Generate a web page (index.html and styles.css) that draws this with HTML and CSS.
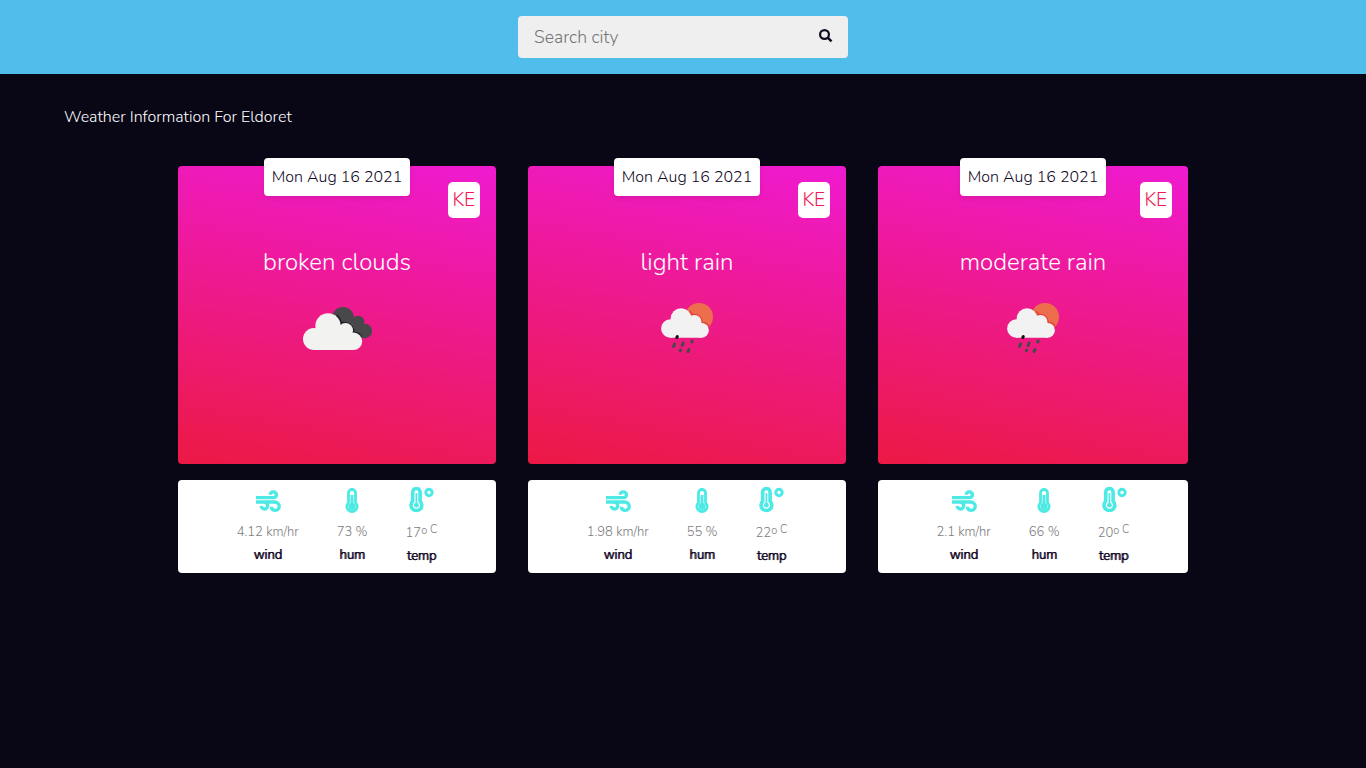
FILE: index.html
```html
<!DOCTYPE html>
<html lang="en">
<head>
<meta charset="utf-8">
<title>Weather</title>
<link rel="stylesheet" href="styles.css">
</head>
<body>
<svg class="defs" width="0" height="0" aria-hidden="true">
  <symbol id="wind" viewBox="0 0 26 24">
    <g fill="none" stroke="currentColor" stroke-width="3.300">
      <path d="M1 8.700H17.800C22.800 8.700 22.400 2.900 18.400 2.900C16.300 2.900 15.300 4.200 15.300 5.800"/>
      <path d="M1 13H8.800C14 13 13.600 20 9.600 20C7.600 20 6.200 18.600 6.200 17"/>
      <path d="M10 13H19.500C25.800 13 25.600 21.300 20.300 21.300C17.800 21.300 16.500 19.800 16.500 17.800"/>
    </g>
  </symbol>
  <symbol id="hum" viewBox="0 0 14 26">
    <path d="M3.500 14.700V5a3.500 3.500 0 0 1 7 0v9.700a5.100 5.100 0 1 1-7 0z" fill="none" stroke="currentColor" stroke-width="2.800"/>
    <circle cx="7" cy="18.600" r="3.500" fill="currentColor"/><path d="M7 7v11" stroke="currentColor" stroke-width="3"/>
  </symbol>
  <symbol id="temp" viewBox="0 0 26 26">
    <path d="M4.700 14.200V5.200a3.700 3.700 0 0 1 7.400 0v9a5.400 5.400 0 1 1-7.400 0z" fill="none" stroke="currentColor" stroke-width="3.600"/>
    <circle cx="8.400" cy="18.200" r="2.400" fill="currentColor"/><path d="M8.400 6v12" stroke="currentColor" stroke-width="1.700"/>
    <circle cx="21" cy="5.500" r="3.200" fill="none" stroke="currentColor" stroke-width="3"/>
  </symbol>
  <symbol id="clouds" viewBox="0 0 100 65">
    <g fill="#48484a"><circle cx="53" cy="23" r="11"/><circle cx="68" cy="27" r="6.300"/><circle cx="75" cy="36" r="7.200"/><path d="M53 25h15l7 18H60z"/></g>
    <path fill="none" stroke="#222226" stroke-width="2" d="M46.500 20q4 4 4.700 8q8-1.500 12.300 6.500v3q5 0 8 4"/>
    <g fill="#f2f2f0"><circle cx="24" cy="44" r="11"/><circle cx="38" cy="31" r="12.700"/><circle cx="55.500" cy="35.500" r="7.500"/><circle cx="63.500" cy="46.300" r="8.700"/><path d="M24 34h30l10 12v9H24z"/></g>
  </symbol>
  <symbol id="rain" viewBox="0 0 100 65">
    <circle cx="59" cy="22" r="14" fill="#ec6e4c"/>
    <path fill="none" stroke="#e33f3d" stroke-width="1.500" d="M49.500 16q2.500 2 2.500 3.500q9-1 10 8q5 0 7 4"/>
    <g fill="#f2f2f2"><circle cx="30.300" cy="33.500" r="9.200"/><circle cx="41" cy="23.500" r="10.300"/><circle cx="54.500" cy="27" r="7"/><circle cx="61.500" cy="35.300" r="7.400"/><path d="M30 25h25l7 10v7.700H30z"/></g>
    <g stroke="#48484a" stroke-width="3" stroke-linecap="round"><path stroke="#111" d="M37.300 41.500l-.5.900"/><path d="M34.500 49l-1 2.500M43.200 48l-1 2.500M52.200 46l-.5.900M40.600 55.200l-.3.500M49 54.500l-1 2"/></g>
  </symbol>
</svg>
<header class="topbar">
  <form class="search">
    <input class="search-input" type="text" placeholder="Search city" aria-label="Search city">
    <svg class="search-icon" viewBox="0 0 14 14"><circle cx="5.500" cy="5.500" r="4.400" fill="none" stroke="currentColor" stroke-width="2.200"/><path d="M8.700 8.700l3.800 3.700" stroke="currentColor" stroke-width="2.500"/></svg>
  </form>
</header>
<main class="content">
  <h1 class="title">Weather Information For Eldoret</h1>
  <div class="cards">
    <article class="card">
      <section class="sky"><time class="date">Mon Aug 16 2021</time><span class="country">KE</span><p class="summary">broken clouds</p><svg class="picture"><use href="#clouds"/></svg></section>
      <section class="stats">
        <div class="stat"><svg class="icon-wind"><use href="#wind"/></svg><span class="value">4.12 km/hr</span><b class="label">wind</b></div>
        <div class="stat"><svg class="icon-hum"><use href="#hum"/></svg><span class="value">73 %</span><b class="label">hum</b></div>
        <div class="stat"><svg class="icon-temp"><use href="#temp"/></svg><span class="value">17<span class="degree">o</span><span class="unit"> C</span></span><b class="label">temp</b></div>
      </section>
    </article>
    <article class="card">
      <section class="sky"><time class="date">Mon Aug 16 2021</time><span class="country">KE</span><p class="summary">light rain</p><svg class="picture"><use href="#rain"/></svg></section>
      <section class="stats">
        <div class="stat"><svg class="icon-wind"><use href="#wind"/></svg><span class="value">1.98 km/hr</span><b class="label">wind</b></div>
        <div class="stat"><svg class="icon-hum"><use href="#hum"/></svg><span class="value">55 %</span><b class="label">hum</b></div>
        <div class="stat"><svg class="icon-temp"><use href="#temp"/></svg><span class="value">22<span class="degree">o</span><span class="unit"> C</span></span><b class="label">temp</b></div>
      </section>
    </article>
    <article class="card">
      <section class="sky"><time class="date">Mon Aug 16 2021</time><span class="country">KE</span><p class="summary">moderate rain</p><svg class="picture"><use href="#rain"/></svg></section>
      <section class="stats">
        <div class="stat"><svg class="icon-wind"><use href="#wind"/></svg><span class="value">2.1 km/hr</span><b class="label">wind</b></div>
        <div class="stat"><svg class="icon-hum"><use href="#hum"/></svg><span class="value">66 %</span><b class="label">hum</b></div>
        <div class="stat"><svg class="icon-temp"><use href="#temp"/></svg><span class="value">20<span class="degree">o</span><span class="unit"> C</span></span><b class="label">temp</b></div>
      </section>
    </article>
  </div>
</main>
</body>
</html>
```
FILE: styles.css
```css
* { box-sizing: border-box; }
body { margin: 0; min-height: 100vh; background: #090616; font-family: Nunito, Lato, "Open Sans", sans-serif; color: #fff; }
.defs { position: absolute; }
.topbar { height: 74px; background: #51bdeb; display: flex; justify-content: center; align-items: center; }
.search { width: 330px; height: 42px; padding: 0 15px 0 16px; border-radius: 4px; background: #efefef; display: flex; align-items: center; }
.search-input { flex: 1; min-width: 0; padding: 0; border: 0; outline: 0; background: transparent; font: 300 17.6px Nunito, Lato, sans-serif; }
.search-input::placeholder { color: #757575; }
.search-icon { width: 14px; height: 14px; color: #110b1d; margin-top: -2px; }
.title { margin: 0; padding: 31px 64px 0; font-size: 16px; line-height: 24px; font-weight: 300; }
.cards { display: grid; grid-template-columns: 318px 318px 310px; gap: 32px; width: 1010px; margin: 37px auto 0; }
.card { display: grid; gap: 16px; }
.sky { position: relative; height: 298px; border-radius: 4px; background: linear-gradient(190deg, #ef1ad0, #ec1944); display: flex; flex-direction: column; align-items: center; }
.date { width: 146px; height: 38px; margin-top: -8px; border-radius: 4px; background: #fff; color: #100522; font-size: 16px; line-height: 38px; font-weight: 300; text-align: center; white-space: nowrap; box-shadow: 0 2px 5px rgba(0, 0, 0, .1); }
.country { position: absolute; top: 16px; right: 16px; width: 32.400px; height: 36px; border-radius: 5px; background: #fff; color: #ed1854; font-size: 19.200px; line-height: 36px; font-weight: 300; text-align: center; }
.summary { margin: 48px 0 0; font-size: 24px; line-height: 36px; font-weight: 300; }
.picture { width: 100px; height: 65px; margin: 15px 0 0 6px; }
.stats { height: 93px; padding-top: 7px; border-radius: 4px; background: #fff; display: flex; justify-content: center; gap: 38px; }
.stat { display: flex; flex-direction: column; align-items: center; white-space: nowrap; color: #4de9e4; }
.icon-wind { width: 26px; height: 24px; margin: 2px 0 3px; }
.icon-hum { width: 14px; height: 26px; margin: 1px 0 2px; }
.icon-temp { width: 26px; height: 26px; margin: 0 0 4px; }
.value { color: #7c7c7c; font-size: 13px; line-height: 32px; font-weight: 300; }
.degree { font-size: 11px; vertical-align: 3px; line-height: 0; }
.unit { font-size: 11px; vertical-align: 4px; line-height: 0; }
.label { color: #100522; font-size: 13px; line-height: 18px; margin-top: -2px; font-weight: 300; text-shadow: .8px 0 0 currentColor; -webkit-text-stroke: .25px currentColor; }
```
